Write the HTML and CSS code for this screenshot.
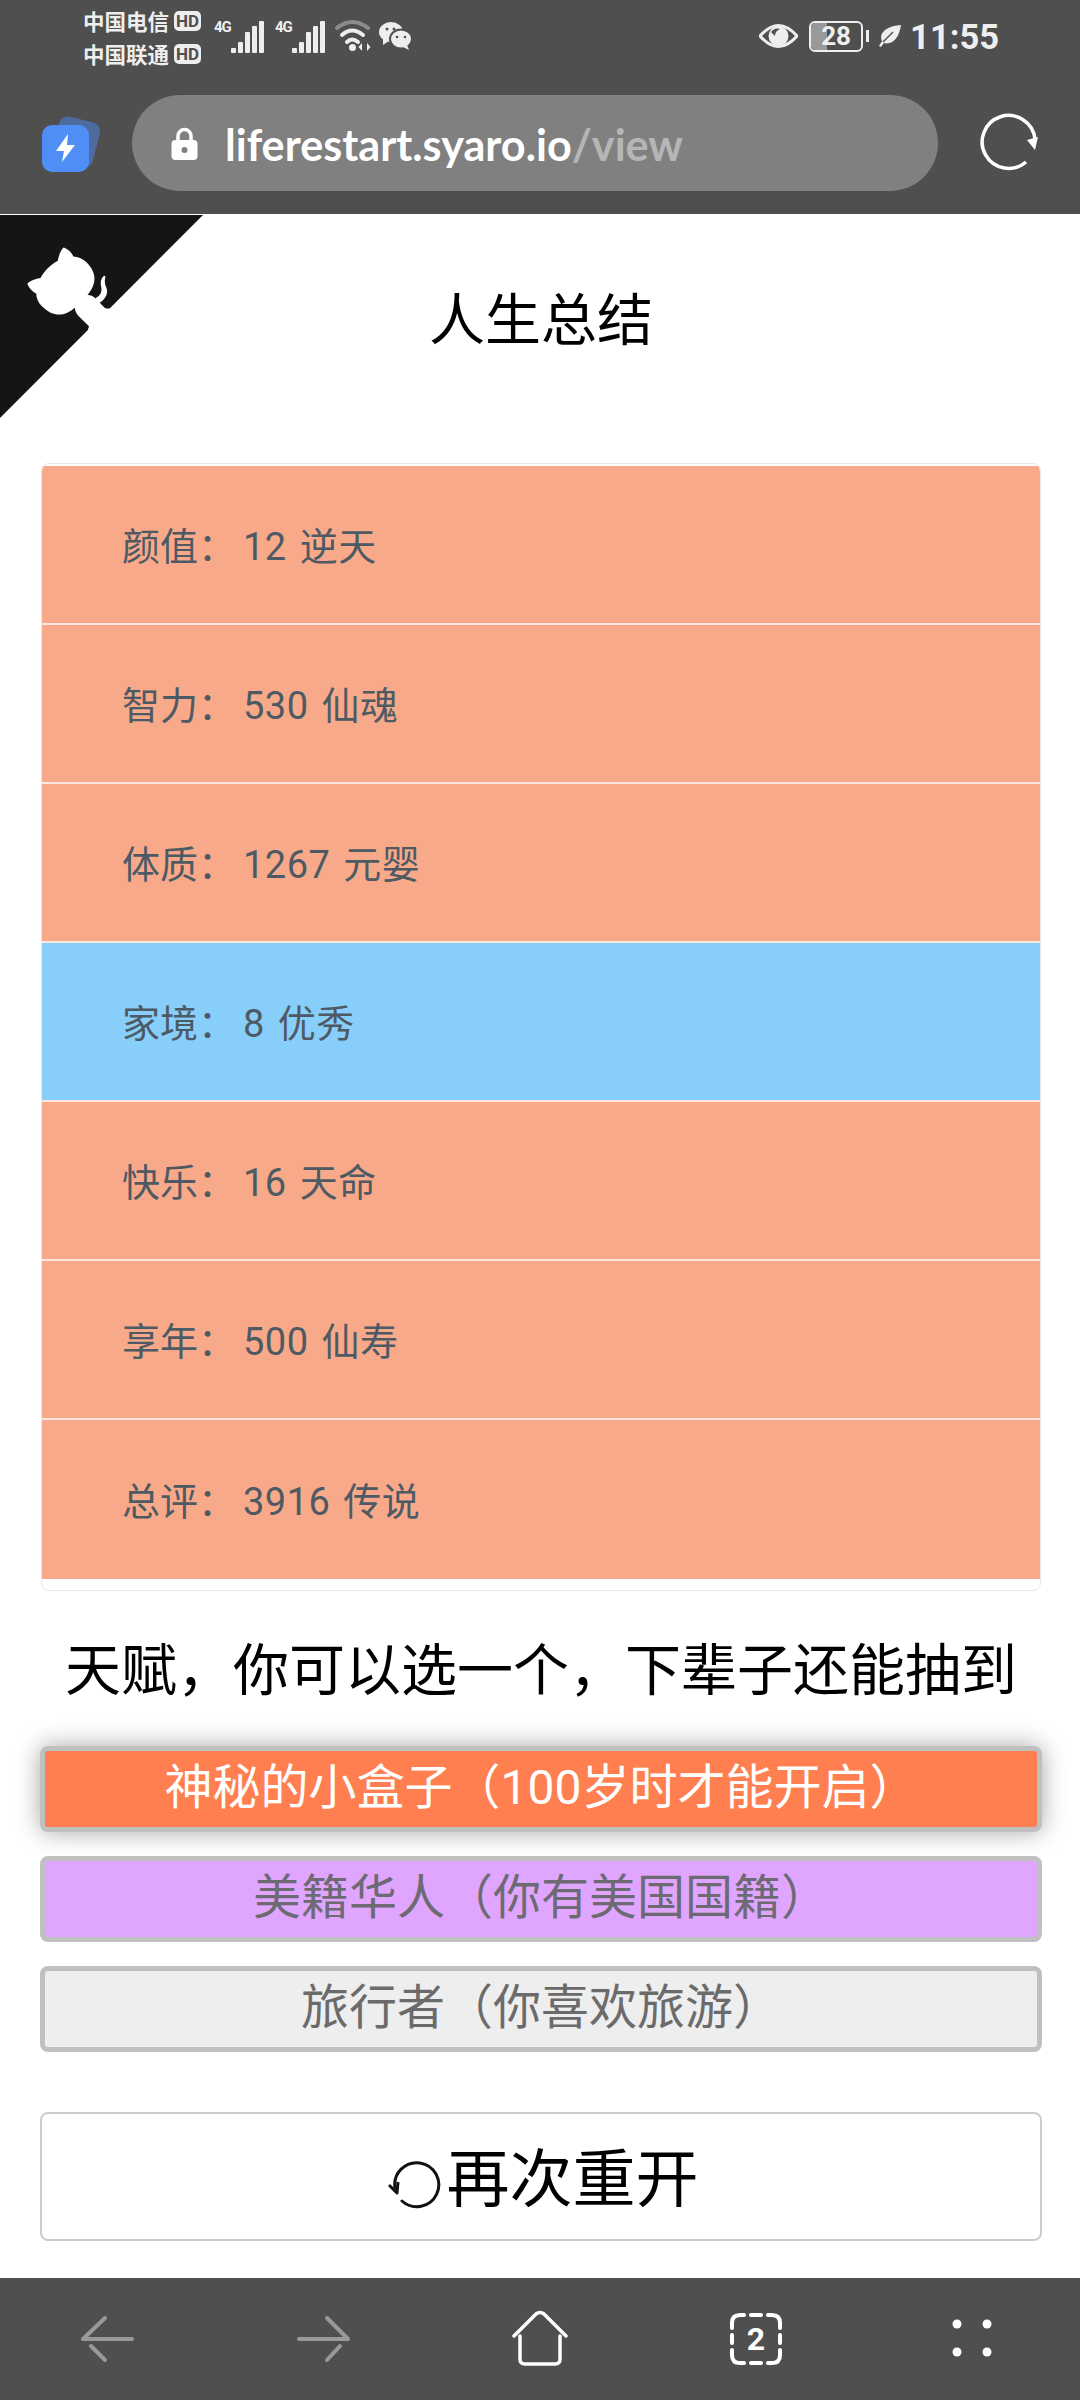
FILE: index.html
```html
<!DOCTYPE html>
<html lang="zh">
<head>
    <meta charset="utf-8">
    <title>人生重开模拟器</title>
    <link rel="stylesheet" href="styles.css">
</head>
<body>
    <div class="phone">
        <header class="browser-top">
            <div class="statusbar">
                <div class="carriers">
                    <div class="carrier">中国电信<span class="hd">HD</span></div>
                    <div class="carrier">中国联通<span class="hd">HD</span></div>
                </div>
                <div class="signal">
                    <span class="net">4G</span>
                    <svg width="33" height="32" viewBox="0 0 33 32" fill="#eee"><rect x="0" y="27" width="5" height="5" rx="1"/><rect x="7" y="21" width="5" height="11" rx="1"/><rect x="14" y="11" width="5" height="21" rx="1"/><rect x="21" y="5" width="5" height="27" rx="1"/><rect x="28" y="0" width="5" height="32" rx="1"/></svg>
                </div>
                <div class="signal">
                    <span class="net">4G</span>
                    <svg width="33" height="32" viewBox="0 0 33 32" fill="#eee"><rect x="0" y="27" width="5" height="5" rx="1"/><rect x="7" y="21" width="5" height="11" rx="1"/><rect x="14" y="11" width="5" height="21" rx="1"/><rect x="21" y="5" width="5" height="27" rx="1"/><rect x="28" y="0" width="5" height="32" rx="1"/></svg>
                </div>
                <svg class="wifi" width="38" height="34" viewBox="0 0 38 34" fill="none" stroke-linecap="round">
                    <path d="M2 9 Q17 -3 33 9" stroke="#8c8c8c" stroke-width="4"/>
                    <path d="M7 16 Q17 7 28 16" stroke="#eee" stroke-width="4"/>
                    <path d="M12 23 Q17 18 23 23" stroke="#eee" stroke-width="4"/>
                    <circle cx="17.500" cy="28.500" r="3.500" fill="#eee"/>
                    <path d="M27 24 L27 32 L23.500 28 Z M32 24 L32 32 L35.500 28 Z" fill="#eee"/>
                </svg>
                <svg class="wechat" width="33" height="28" viewBox="0 0 33 28">
                    <ellipse cx="12" cy="10" rx="12" ry="10" fill="#eee"/>
                    <path d="M4 16 L4 23 L10 19 Z" fill="#eee"/>
                    <ellipse cx="22" cy="17" rx="11" ry="9.500" fill="#eee" stroke="#4f4f4f" stroke-width="2"/>
                    <path d="M28 23 L30 28 L24 25 Z" fill="#eee"/>
                    <circle cx="8" cy="7" r="1.500" fill="#4f4f4f"/>
                    <circle cx="15" cy="7" r="1.500" fill="#4f4f4f"/>
                    <circle cx="18" cy="15" r="1.300" fill="#4f4f4f"/>
                    <circle cx="26" cy="15" r="1.300" fill="#4f4f4f"/>
                </svg>
                <div class="status-right">
                    <svg width="39" height="26" viewBox="0 0 39 26">
                        <path d="M1 13 Q19.500 -8 38 13 Q19.500 34 1 13 Z" fill="none" stroke="#eee" stroke-width="3"/>
                        <circle cx="19.500" cy="13" r="10" fill="#eee"/>
                        <path d="M12 9 Q16 4 21 6 Q16 8 16 13 Z" fill="#4f4f4f"/>
                    </svg>
                    <div class="battery">
                        <span class="battery-level"></span>
                        <span class="battery-text">28</span>
                    </div>
                    <span class="battery-tip"></span>
                    <svg class="leaf" width="22" height="22" viewBox="0 0 22 22" fill="#eee">
                        <path d="M22 0 C20 14 13 20 5 18 L2 22 L0 21 L3 16 C-1 8 8 1 22 0 Z"/>
                        <path d="M4 17 L14 7" stroke="#4f4f4f" stroke-width="1.500"/>
                    </svg>
                    <span class="clock">11:55</span>
                </div>
            </div>
            <div class="toolbar">
                <svg class="bolt-icon" width="62" height="62" viewBox="0 0 62 62">
                    <rect x="13" y="6" width="42" height="46" rx="9" fill="#4d6b9f" transform="rotate(14 34 29)"/>
                    <rect x="0" y="12" width="47" height="47" rx="10" fill="#4f8ef5"/>
                    <path d="M26 21 L14 38 L22 38 L20 49 L33 32 L25 32 Z" fill="#fff"/>
                </svg>
                <div class="urlbar">
                    <svg width="27" height="33" viewBox="0 0 27 33">
                        <path d="M7 15 V9 a6.500 6.500 0 0 1 13 0 V15" fill="none" stroke="#fff" stroke-width="3.500"/>
                        <rect x="0.500" y="13" width="26" height="20" rx="4" fill="#fff"/>
                        <circle cx="13.500" cy="23" r="3" fill="#808080"/>
                    </svg>
                    <span class="url">liferestart.syaro.io<span class="url-path">/view</span></span>
                </div>
                <svg class="reload" width="60" height="60" viewBox="0 0 60 60" fill="none">
                    <path d="M47 49 A26.500 26.500 0 1 1 56 26" stroke="#fff" stroke-width="3.500"/>
                    <path d="M48 27 L59 24 L56 37 Z" fill="#fff"/>
                </svg>
            </div>
        </header>

        <main class="page">
            <a class="github-corner" href="#">
                <svg width="203" height="203" viewBox="0 0 250 250">
                    <path d="M0,0 L115,115 L130,115 L142,142 L250,250 L250,0 Z" fill="#151513"/>
                    <path d="M128.3,109.0 C113.8,99.7 119.0,89.6 119.0,89.6 C122.0,82.7 120.5,78.6 120.5,78.6 C119.2,72.0 123.4,76.3 123.4,76.3 C127.3,80.9 125.5,87.3 125.5,87.3 C122.9,97.6 130.6,101.9 134.4,103.2" fill="#fff"/>
                    <path d="M115.0,115.0 C114.9,115.1 118.7,116.5 119.8,115.4 L133.7,101.6 C136.9,99.2 139.9,98.4 142.2,98.6 C133.8,88.0 127.5,74.4 143.8,58.0 C148.5,53.4 154.0,51.2 159.7,51.0 C160.3,49.4 163.2,43.6 171.4,40.1 C171.4,40.1 176.1,42.5 178.8,56.2 C183.1,58.6 187.2,61.8 190.9,65.4 C194.5,69.0 197.7,73.2 200.1,77.6 C213.8,80.2 216.3,84.9 216.3,84.9 C212.7,93.1 206.9,96.0 205.4,96.6 C205.1,102.4 203.0,107.8 198.3,112.5 C181.9,128.9 168.3,122.5 157.7,114.1 C157.9,116.9 156.7,120.9 152.7,124.9 L141.0,136.5 C139.8,137.7 141.6,141.9 141.8,141.8 Z" fill="#fff"/>
                </svg>
            </a>

            <h1 class="title">人生总结</h1>

            <ul class="summary">
                <li class="summary-row grade-orange"><span class="label">颜值：</span>12 逆天</li>
                <li class="summary-row grade-orange"><span class="label">智力：</span>530 仙魂</li>
                <li class="summary-row grade-orange"><span class="label">体质：</span>1267 元婴</li>
                <li class="summary-row grade-blue"><span class="label">家境：</span>8 优秀</li>
                <li class="summary-row grade-orange"><span class="label">快乐：</span>16 天命</li>
                <li class="summary-row grade-orange"><span class="label">享年：</span>500 仙寿</li>
                <li class="summary-row grade-orange"><span class="label">总评：</span>3916 传说</li>
            </ul>

            <h2 class="talent-title">天赋，你可以选一个，下辈子还能抽到</h2>

            <ul class="talents">
                <li class="talent talent-selected">神秘的小盒子（100岁时才能开启）</li>
                <li class="talent talent-purple">美籍华人（你有美国国籍）</li>
                <li class="talent talent-plain">旅行者（你喜欢旅游）</li>
            </ul>

            <button class="restart" type="button">
                <svg width="54" height="56" viewBox="0 0 54 56" fill="none" stroke="#111" stroke-width="3">
                    <path d="M14 46 A22 22 0 1 0 7 33" stroke-linecap="round"/>
                    <path d="M1 30 L9 38 L10 27" stroke-linejoin="round"/>
                </svg>再次重开
            </button>
        </main>

        <!-- 底部导航 -->
        <nav class="bottom-nav">
            <div class="nav-item">
                <svg width="60" height="60" viewBox="0 0 60 60" fill="none" stroke="#999" stroke-width="4" stroke-linecap="round">
                    <path d="M5 30 H54 M5 30 L27 9 M13 37 L27 51"/>
                </svg>
            </div>
            <div class="nav-item">
                <svg width="60" height="60" viewBox="0 0 60 60" fill="none" stroke="#999" stroke-width="4" stroke-linecap="round">
                    <path d="M5 30 H54 M54 30 L33 9 M46 37 L33 51"/>
                </svg>
            </div>
            <div class="nav-item">
                <svg width="60" height="60" viewBox="0 0 60 60" fill="none" stroke="#fff" stroke-width="3.500" stroke-linecap="round" stroke-linejoin="round">
                    <path d="M4 27 L26 5 Q30 2 34 5 L56 27"/>
                    <path d="M10 27 V50 Q10 55 15 55 H45 Q50 55 50 50 V27"/>
                </svg>
            </div>
            <div class="nav-item">
                <div class="tabs-count">
                    <svg width="52" height="52" viewBox="0 0 52 52" fill="none" stroke="#fff" stroke-width="4" stroke-linecap="round">
                        <path d="M2 15 V10 Q2 2 10 2 H14 M21 2 H31 M38 2 H42 Q50 2 50 10 V15 M50 22 V30 M50 37 V42 Q50 50 42 50 H38 M31 50 H21 M14 50 H10 Q2 50 2 42 V37 M2 30 V22"/>
                    </svg>
                    <span class="tabs-num">2</span>
                </div>
            </div>
            <div class="nav-item">
                <svg width="60" height="60" viewBox="0 0 60 60" fill="#fff">
                    <circle cx="15" cy="15" r="4.500"/><circle cx="45" cy="15" r="4.500"/>
                    <circle cx="15" cy="43" r="4.500"/><circle cx="45" cy="43" r="4.500"/>
                </svg>
            </div>
        </nav>
    </div>
</body>
</html>
```

FILE: styles.css
```css
* {
    box-sizing: border-box;
}

body {
    margin: 0;
    background-color: #fff;
    font-family: Roboto, "Noto Sans CJK SC", sans-serif;
}

ul {
    list-style: none;
    margin: 0;
    padding: 0;
}

.phone {
    display: flex;
    flex-direction: column;
    width: 1080px;
    height: 2400px;
    overflow: hidden;
}

/* 顶部状态栏和地址栏 */
.browser-top {
    height: 214px;
    background-color: #4f4f4f;
}

.statusbar {
    display: flex;
    align-items: center;
    height: 72px;
    padding-left: 83px;
    color: #eee;
}

.carriers {
    width: 131px;
    padding-top: 2px;
}

.carrier {
    display: flex;
    align-items: center;
    height: 33px;
    font-size: 21.500px;
    font-weight: 700;
}

.hd {
    width: 27px;
    height: 20px;
    margin-left: 5px;
    border-radius: 5px;
    background-color: #eee;
    color: #4f4f4f;
    font-size: 17px;
    font-weight: 700;
    line-height: 20px;
    text-align: center;
}

.signal {
    display: flex;
    width: 61px;
}

.net {
    width: 17px;
    height: 16px;
    font-size: 15px;
    font-weight: 700;
    line-height: 16px;
    letter-spacing: -1px;
}

.signal svg {
    margin-top: 2px;
}

.wifi {
    margin-left: -1px;
}

.wechat {
    margin-left: 6px;
}

.status-right {
    display: flex;
    align-items: center;
    margin-left: auto;
    padding-right: 81px;
}

.battery {
    position: relative;
    width: 54px;
    height: 31px;
    margin-left: 11px;
    border: 2.5px solid #eee;
    border-radius: 6px;
    overflow: hidden;
}

.battery-level {
    display: block;
    width: 16px;
    height: 100%;
    margin: 0;
    background-color: #999;
}

.battery-text {
    position: absolute;
    top: 0;
    left: 0;
    width: 100%;
    font-size: 26px;
    font-weight: 700;
    line-height: 26px;
    text-align: center;
}

.battery-tip {
    width: 3px;
    height: 12px;
    margin-left: 3px;
    background-color: #eee;
}

.leaf {
    margin-left: 10px;
}

.clock {
    margin-left: 9px;
    padding-top: 2px;
    font-size: 34.500px;
    font-weight: 700;
}

.toolbar {
    display: flex;
    align-items: center;
    height: 142px;
    padding-left: 42px;
}

.bolt-icon {
    margin-top: 2px;
}

.urlbar {
    display: flex;
    align-items: center;
    width: 806px;
    height: 96px;
    margin-left: 28px;
    padding-left: 39px;
    border-radius: 48px;
    background-color: #808080;
}

.url {
    margin-left: 27px;
    padding-top: 2px;
    color: #fff;
    font-family: Lato, sans-serif;
    font-size: 43.200px;
    font-weight: 700;
}

.url-path {
    color: #b6b6b6;
}

.reload {
    margin-left: 41px;
}

/* 页面内容 */
.page {
    position: relative;
    flex: 1;
    padding: 0 38px 0 40px;
}

.github-corner {
    position: absolute;
    top: 1px;
    left: 0;
    transform: scaleX(-1);
    line-height: 0;
}

.title {
    margin: 67px 0 102px;
    color: #000;
    font-size: 56px;
    font-weight: 400;
    line-height: 80px;
    text-align: center;
}

.summary {
    margin: 0 1px;
    padding: 2px 0 11px;
    border: 1px solid #e8e8e8;
    border-radius: 8px;
    overflow: hidden;
}

.summary-row {
    display: flex;
    align-items: center;
    height: 159px;
    padding: 0 0 2px 80px;
    border-bottom: 2px solid #fde6dc;
    color: #4e5a63;
    font-size: 38px;
    letter-spacing: 0.5px;
    word-spacing: 3px;
    white-space: pre;
}

.summary-row:last-child {
    border-bottom: none;
}

.label {
    margin-right: 7px;
    letter-spacing: 0;
}

.grade-orange {
    background-color: #f8a98a;
}

.grade-blue {
    background-color: #87cefa;
}

.talent-title {
    margin: 40px 0 35px;
    color: #000;
    font-size: 56px;
    font-weight: 400;
    line-height: 80px;
    text-align: center;
    white-space: nowrap;
}

.talents {
    display: flex;
    flex-direction: column;
    gap: 24px;
}

.talent {
    height: 86px;
    border: 5px solid #c0c0c0;
    border-radius: 8px;
    font-size: 48px;
    line-height: 74px;
    text-align: center;
}

.talent-selected {
    background-color: #ff7f50;
    color: #fff;
    box-shadow: 0 0 24px rgba(0, 0, 0, 0.35);
}

.talent-purple {
    background-color: #e0a6ff;
    color: #6d6a73;
}

.talent-plain {
    background-color: #eee;
    color: #6b6b6b;
}

.restart {
    display: flex;
    align-items: center;
    justify-content: center;
    width: 100%;
    height: 129px;
    margin-top: 60px;
    padding: 0 0 6px 12px;
    border: 2px solid #ccc;
    border-radius: 8px;
    background-color: #fff;
    color: #000;
    font-family: inherit;
    font-size: 63px;
}

.restart svg {
    margin-top: 18px;
    margin-left: -8px;
    margin-right: 5px;
}

/* 底部导航 */
.bottom-nav {
    display: grid;
    grid-template-columns: repeat(5, 216px);
    height: 122px;
    background-color: #4f4f4f;
}

.nav-item {
    display: flex;
    align-items: center;
    justify-content: center;
}

.tabs-count {
    position: relative;
    width: 52px;
    height: 52px;
}

.tabs-num {
    position: absolute;
    top: 0;
    left: 0;
    width: 100%;
    color: #fff;
    font-size: 32px;
    font-weight: 700;
    line-height: 52px;
    text-align: center;
}
```
